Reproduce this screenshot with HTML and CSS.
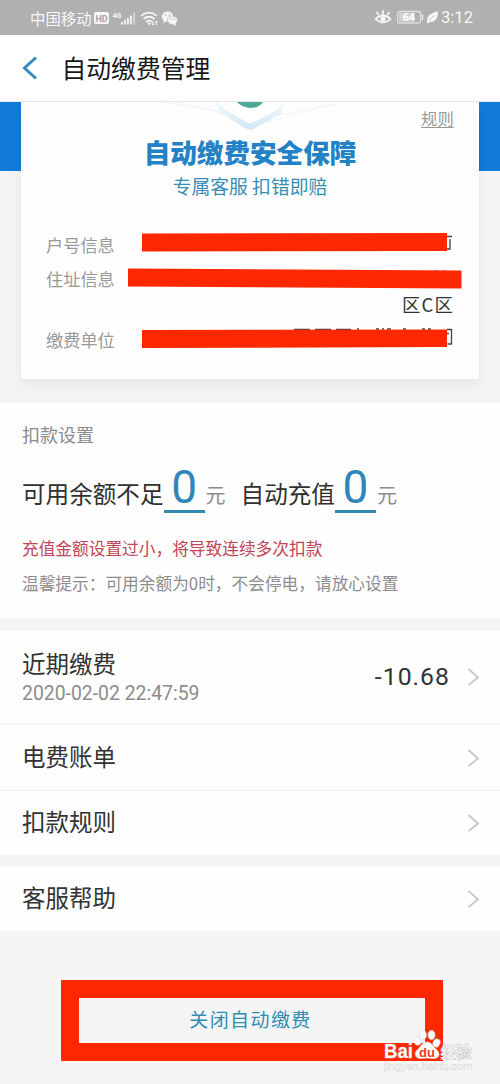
FILE: index.html
```html
<!DOCTYPE html>
<html lang="zh-CN">
<head>
<meta charset="utf-8">
<title>自动缴费管理</title>
<link rel="stylesheet" href="styles.css">
</head>
<body>
<div class="screen">
  <div class="status">
    <span class="carrier">中国移动</span>
    <svg class="status-left" width="90" height="24" viewBox="0 0 90 24">
      <rect x="2" y="6" width="15" height="12" rx="2" fill="#f6f6f6"/>
      <text x="9.5" y="15.5" class="hd">HD</text>
      <text x="20.500" y="11.500" class="net">4G</text>
      <g fill="#f6f6f6"><rect x="29" y="16" width="1.800" height="2.500"/><rect x="32" y="14" width="1.800" height="4.500"/><rect x="35" y="12" width="1.800" height="6.500"/><rect x="38" y="9.500" width="1.800" height="9"/><rect x="41.500" y="6" width="1.300" height="12.500" opacity=".7"/></g>
      <g fill="none" stroke="#f6f6f6" stroke-width="1.700"><path d="M49 9.800q8-6.500 16 0M51.500 13q5.500-4.500 11 0M54 15.800q3-2.500 6 0"/></g>
      <circle cx="57" cy="17.500" r="1.300" fill="#f6f6f6"/><path d="M61 15v4m-1.200-1.500L61 19l1.200-1.500M64.500 19v-4m-1.200 1.500L64.500 15l1.200 1.500" fill="none" stroke="#f6f6f6"/>
      <g fill="#f6f6f6"><ellipse cx="75.500" cy="10.500" rx="5.700" ry="4.900"/><path d="M72 13l-1 4 4-2z"/><ellipse cx="80.500" cy="14.300" rx="5" ry="4.300" stroke="#b0b0b0" stroke-width=".7"/><path d="M81 18l3 2-.5-3z"/></g>
      <g fill="#aaa"><circle cx="73.500" cy="9" r=".8"/><circle cx="77.500" cy="9" r=".8"/><circle cx="79" cy="13.200" r=".7"/><circle cx="82" cy="13.200" r=".7"/></g>
    </svg>
    <svg class="status-right" width="66" height="24" viewBox="0 0 66 24">
      <g fill="none" stroke="#f6f6f6" stroke-width="1.700"><path d="M1.500 13Q9 6 16.500 13Q9 20 1.500 13zM9 9V4M4.800 9L2.500 6M13.200 9l2.300-3"/></g>
      <circle cx="9" cy="13" r="2.700" fill="#f6f6f6"/>
      <rect x="23.500" y="5.500" width="23" height="11.500" rx="2" fill="none" stroke="#dedede" stroke-width="1.300"/>
      <rect x="25" y="7" width="15" height="8.500" fill="#d4d4d4"/>
      <path d="M48.500 8.500v5.500" stroke="#eee" stroke-width="1.500"/>
      <text x="35" y="15.200" class="batt">64</text>
      <path d="M53 16.500Q52 7.500 64 5.500Q64 16.500 56 16L53.500 17.500z" fill="#f6f6f6"/><path d="M55 14.500l5-5" stroke="#b0b0b0" stroke-width=".7"/>
    </svg>
    <span class="time">3:12</span>
  </div>
  <div class="header">
    <svg class="back" width="16" height="24" viewBox="0 0 16 24"><path d="M14 1.500L2.500 12L14 22.500" fill="none" stroke="#3289bd" stroke-width="2.900"/></svg>
    <h1 class="title">自动缴费管理</h1>
  </div>
  <div class="hero">
    <div class="card">
      <svg class="shield" width="180" height="34" viewBox="0 0 180 34">
        <defs><linearGradient id="rim" x1="0" y1="0" x2="0" y2="1"><stop offset="0" stop-color="#f3fafb"/><stop offset="1" stop-color="#d0e6f4"/></linearGradient></defs>
        <path d="M0 0L65 10M15 0l65 16M100 16L175 2M106 20L155 7" stroke="#edf5f8"/>
        <path d="M54 0L60 11L84 26Q89 29 94 26L120 12L124 0z" fill="url(#rim)"/>
        <path d="M57 0L62 6L85 20Q89 22 93 20L117 7L121 0z" fill="#fff"/>
        <path d="M76 0Q80 5 89 6Q98 6 102 0z" fill="#4fa99b"/>
      </svg>
      <a class="rules">规则</a>
      <div class="card-title">自动缴费安全保障</div>
      <div class="card-sub">专属客服 扣错即赔</div>
      <div class="info">
        <span class="label l1">户号信息</span>
        <span class="label l2">住址信息</span>
        <span class="area">区C区</span>
        <span class="label l3">缴费单位</span>
      </div>
      <svg class="marks" width="458" height="277" viewBox="0 0 458 277">
        <g fill="none" stroke="#444" stroke-width="1.300"><path d="M426 134.500h5M429 137v10h-3M273 227.500h16M294 227.500h16M315 227.500h15M336 227h2M355 227h3M361 227h2M366 227h4M382 227h3M401 227h3M407 227h3M426 227.500h4.500v14.500h-4M426 231.500h2M415 168v2M423 168v2"/></g>
        <g fill="#fe2800"><path d="M121 131.500L426 131V149L121 149.500z"/><path d="M107 166.500L440.500 168.500V186.500L107 184.500z"/><path d="M121 228L426 227.500V245L121 246z"/></g>
      </svg>
    </div>
  </div>
  <section class="settings">
    <div class="sec-title">扣款设置</div>
    <div class="amounts">
      <span class="phrase">可用余额不足</span><span class="num">0</span><span class="unit">元</span>
      <span class="phrase second">自动充值</span><span class="num">0</span><span class="unit">元</span>
    </div>
    <div class="warn">充值金额设置过小，将导致连续多次扣款</div>
    <div class="tip">温馨提示：可用余额为0时，不会停电，请放心设置</div>
  </section>
  <div class="list">
    <div class="row recent">
      <div class="row-text"><div class="name">近期缴费</div><div class="date">2020-02-02 22:47:59</div></div>
      <span class="value">-10.68</span>
      <svg class="chev" width="13" height="20" viewBox="0 0 13 20"><path d="M1.500 2L11 10.500L1.500 18" fill="none" stroke="#c8c8c8" stroke-width="1.800"/></svg>
    </div>
    <div class="row bill"><div class="name">电费账单</div><svg class="chev" width="13" height="20" viewBox="0 0 13 20"><path d="M1.500 2L11 10.500L1.500 18" fill="none" stroke="#c8c8c8" stroke-width="1.800"/></svg></div>
    <div class="row"><div class="name">扣款规则</div><svg class="chev" width="13" height="20" viewBox="0 0 13 20"><path d="M1.500 2L11 10.500L1.500 18" fill="none" stroke="#c8c8c8" stroke-width="1.800"/></svg></div>
  </div>
  <div class="row help"><div class="name">客服帮助</div><svg class="chev" width="13" height="20" viewBox="0 0 13 20"><path d="M1.500 2L11 10.500L1.500 18" fill="none" stroke="#c8c8c8" stroke-width="1.800"/></svg></div>
  <div class="close">关闭自动缴费</div>
  <svg class="watermark" width="110" height="60" viewBox="0 0 110 60">
    <text x="4" y="37" class="bai" textLength="29" lengthAdjust="spacingAndGlyphs">Bai</text>
    <g fill="#fff" stroke="#d2d2d2" stroke-width=".6"><ellipse cx="37.500" cy="20" rx="3.500" ry="4.300" transform="rotate(-20 37.500 20)"/><ellipse cx="43" cy="14" rx="3.500" ry="4.700"/><ellipse cx="51.500" cy="14" rx="3.500" ry="4.700"/><ellipse cx="56.500" cy="22" rx="3.500" ry="4.300" transform="rotate(20 56.500 22)"/><path d="M47 21C42 21 41 26 37 29C33 33 36 38 41 37.500Q47 36.500 53 37.500C59 38 61 33 57 29C53 26 52 21 47 21z"/></g>
    <text x="47" y="35.500" class="du">du</text>
    <text x="60.500" y="36.500" class="exp">经验</text>
    <text x="4" y="49" class="url" textLength="88" lengthAdjust="spacingAndGlyphs">jingyan.baidu.com</text>
  </svg>
</div>
</body>
</html>
```

FILE: styles.css
```css
* { box-sizing: border-box; }
body { margin: 0; background: #f5f5f5; font-family: "Noto Sans CJK SC", sans-serif; }
.screen { position: relative; width: 500px; height: 1084px; overflow: hidden; background: #f5f5f5; }

.status { display: flex; align-items: center; height: 35px; padding-left: 30px; background: #b0b0b0; color: #f6f6f6; }
.carrier { width: 62px; font-size: 15.4px; line-height: 34px; white-space: nowrap; }
.status-left { flex: none; }
.status-right { flex: none; margin-left: 192px; }
.time { margin-left: 1px; font: 16.6px/34px Roboto, sans-serif; white-space: nowrap; }
.hd { font: bold 9px Roboto, sans-serif; text-anchor: middle; fill: #a5a5a5; }
.net { font: bold 7px Roboto, sans-serif; fill: #f6f6f6; }
.batt { font: bold 11px Roboto, sans-serif; text-anchor: middle; fill: #fff; }

.header { display: flex; align-items: center; height: 67px; padding-left: 22px; background: #fff; border-bottom: 1px solid #e4e8ea; }
.back { margin-right: 23.500px; }
.title { margin: 0 0 2px; font-size: 24.8px; font-weight: 400; line-height: 64px; color: #181818; }

.hero { height: 301px; padding: 0 21px; background: linear-gradient(#107bd8 0 68.500px, #f4f4f4 69px); }
.card { position: relative; height: 277px; padding-top: 2px; background: #fefefe; border-radius: 0 0 3px 3px; box-shadow: 0 5px 12px rgba(0, 0, 0, .06); }
.shield { position: absolute; left: 140px; top: 0; }
.rules { position: relative; display: block; width: 33px; height: 25px; margin-left: 400px; font-size: 16.4px; line-height: 28px; color: #999; text-decoration: underline; text-underline-offset: 2px; text-decoration-thickness: 1px; }
.card-title { position: relative; height: 45px; font-size: 26.6px; font-weight: 900; line-height: 45px; text-align: center; color: #2382c5; }
.card-sub { height: 28px; font-size: 18.800px; line-height: 24px; text-align: center; color: #378eb2; }
.info { display: grid; grid-template-columns: 150px 1fr; grid-template-rows: 34px 34px 20px 48px; margin-top: 26px; padding: 0 25px 0 25px; align-items: center; }
.label { font-size: 17.200px; line-height: 30px; color: #999; }
.l1 { grid-area: 1 / 1; }
.l2 { grid-area: 2 / 1; }
.area { grid-area: 3 / 2; padding-bottom: 4px; text-align: right; font-size: 18.4px; line-height: 20px; letter-spacing: 1.200px; color: #333; }
.l3 { grid-area: 4 / 1; }
.marks { position: absolute; left: 0; top: 0; }

.settings { height: 215px; padding: 17px 22px 0; background: #fefefe; }
.sec-title { height: 28px; font-size: 18px; line-height: 28px; color: #8b8b8b; }
.amounts { display: flex; align-items: flex-end; height: 65px; font-size: 23.6px; line-height: 36px; color: #303030; white-space: nowrap; }
.phrase { padding-bottom: 2px; }
.num { width: 41px; height: 49px; border-bottom: 3px solid #3289b2; font: 46px/46px Roboto, sans-serif; text-align: center; color: #3085bb; }
.unit { margin-left: 1px; font-size: 20px; color: #8c8c8c; }
.second { margin-left: 15px; }
.warn { margin-top: 20px; font-size: 16.7px; line-height: 30px; color: #bf4557; }
.tip { margin-top: 5px; font-size: 16.7px; line-height: 30px; color: #8d8d8d; }

.list { margin-top: 13px; }
.row { display: flex; align-items: center; height: 64px; padding: 0 20px 0 22px; background: #fefefe; }
.recent { height: 94px; border-bottom: 2px solid #f5f5f5; }
.bill { height: 66px; border-bottom: 1px solid #eee; }
.help { margin-top: 12px; }
.name { flex: 1; padding-bottom: 3px; font-size: 23.5px; line-height: 33px; color: #333; }
.row-text { flex: 1; padding-bottom: 2px; }
.date { margin-top: -1px; font: 19.4px/24px Roboto, sans-serif; color: #8c8c8c; }
.value { margin-right: 17px; font: 24.8px/30px Roboto, sans-serif; letter-spacing: 1px; color: #333; }
.chev { flex: none; }

.close { width: 382px; height: 81px; margin: 49px 0 0 61px; padding-right: 3px; border: 18px solid #fe2800; font-size: 19px; line-height: 41px; letter-spacing: 1.4px; text-align: center; color: #2f8db4; }

.watermark { position: absolute; left: 380px; top: 1021px; }
.bai { font: bold 21px "Liberation Sans", sans-serif; fill: #fff; stroke: #d8d8d8; stroke-width: .4px; }
.du { font: bold 13px "Liberation Sans", sans-serif; text-anchor: middle; fill: #f03a20; }
.exp { font: bold 15.5px "Noto Sans CJK SC", sans-serif; fill: #fff; stroke: #c6c6c6; stroke-width: .6px; }
.url { font: 10px "Liberation Sans", sans-serif; fill: #f8f8f8; stroke: #dedede; stroke-width: .5px; }
```
